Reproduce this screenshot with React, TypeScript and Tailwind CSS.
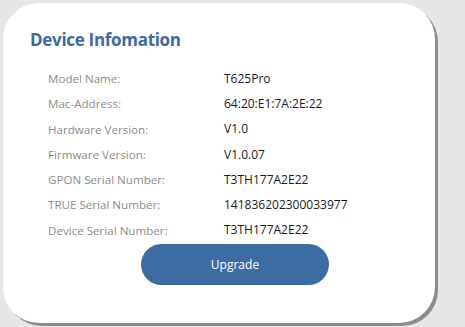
export default function App() {
  const rows = [
    ["Model Name:", "T625Pro"],
    ["Mac-Address:", "64:20:E1:7A:2E:22"],
    ["Hardware Version:", "V1.0"],
    ["Firmware Version:", "V1.0.07"],
    ["GPON Serial Number:", "T3TH177A2E22"],
    ["TRUE Serial Number:", "141836202300033977"],
    ["Device Serial Number:", "T3TH177A2E22"],
  ];

  return (
    <div className="w-[465px] h-[327px] bg-[#e6e6e6] pl-[3px] pt-[3px] overflow-hidden font-['Open_Sans',sans-serif]">
      <div className="w-[432px] h-[320px] bg-white rounded-[36px] shadow-[3px_3px_0_#8c8c8c] pl-[27px] pt-[25px]">
        <h2 className="text-[17px] leading-[24px] font-bold text-[#3b6aa5] tracking-[-0.3px]">
          Device Infomation
        </h2>
        <div className="mt-[14px] pl-[18px]">
          {rows.map(([label, value]) => (
            <div key={label} className="flex h-[25.3px] items-center">
              <span className="w-[176px] text-[11.6px] text-[#8c8c8c]">{label}</span>
              <span className="text-[12px] text-[#1a1a1a]">{value}</span>
            </div>
          ))}
        </div>
        <div className="mt-[1px] ml-[111px]">
          <button className="w-[188px] h-[41px] rounded-full bg-[#3d6ba4] text-white text-[12px]">
            Upgrade
          </button>
        </div>
      </div>
    </div>
  );
}
